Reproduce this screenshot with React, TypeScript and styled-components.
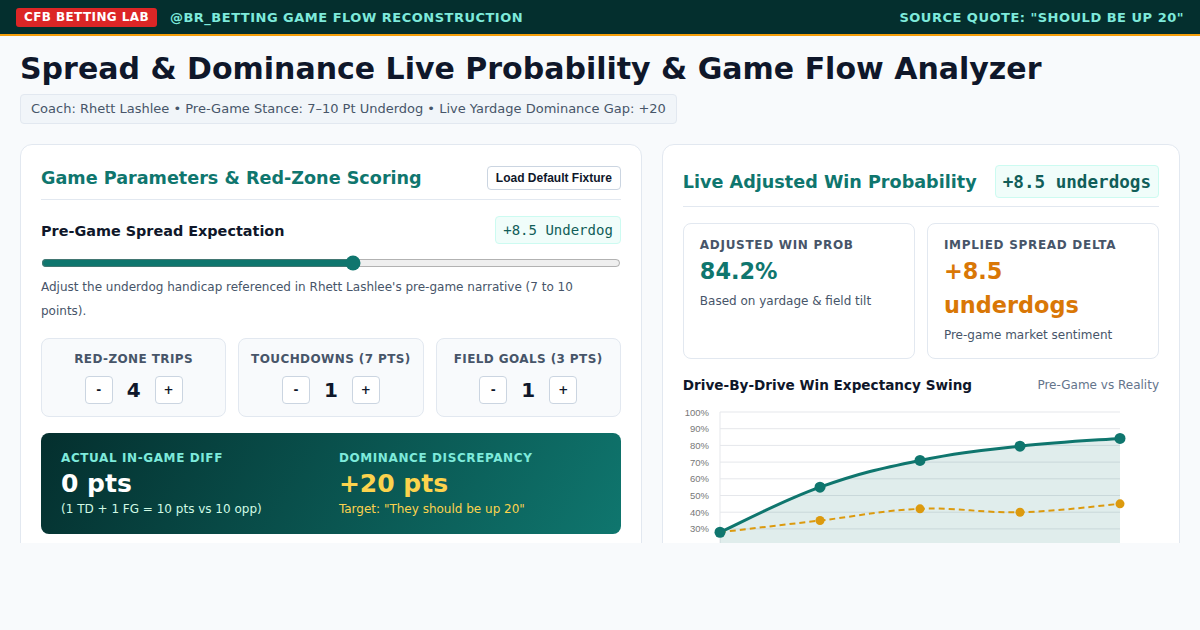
import React from "react";
import styled, { createGlobalStyle } from "styled-components";

const GlobalStyle = createGlobalStyle`
  * { box-sizing: border-box; }
  body {
    margin: 0;
    background: #f8fafc;
    font-family: "DejaVu Sans", "Noto Sans", sans-serif;
    color: #0f172a;
  }
`;

const S = {
  TopBar: styled.header`
    height: 36px;
    background: #042f2e;
    border-bottom: 2px solid #f59e0b;
    display: flex;
    align-items: center;
    justify-content: space-between;
    padding: 0 16px;
  `,
  Brand: styled.div`
    display: flex;
    align-items: center;
    gap: 13px;
  `,
  Badge: styled.span`
    background: #dc2626;
    color: #fff;
    font-size: 12px;
    font-weight: 700;
    letter-spacing: 0.4px;
    padding: 2px 8px;
    border-radius: 3px;
    line-height: 15px;
  `,
  BarText: styled.span`
    color: #7eeadb;
    font-size: 13px;
    font-weight: 700;
    letter-spacing: 0.5px;
  `,
  Main: styled.main`
    padding: 14px 20px 0;
  `,
  Title: styled.h1`
    margin: 0 0 6px;
    font-size: 30px;
    line-height: 38px;
    font-weight: 700;
    color: #0f172a;
  `,
  Subtitle: styled.div`
    display: inline-block;
    background: #f1f5f9;
    border: 1px solid #e2e8f0;
    border-radius: 4px;
    padding: 6px 10px;
    font-size: 13px;
    line-height: 16px;
    color: #475569;
  `,
  Grid: styled.div`
    margin-top: 20px;
    display: grid;
    grid-template-columns: 1.2fr 1fr;
    gap: 20px;
    height: 399px;
    overflow: hidden;
    align-items: start;
  `,
  Card: styled.section`
    background: #fff;
    border: 1px solid #e2e8f0;
    border-radius: 12px;
    padding: 20px;
  `,
  CardHeader: styled.div`
    display: flex;
    align-items: center;
    justify-content: space-between;
    gap: 12px;
    padding-bottom: 8px;
    border-bottom: 1px solid #e2e8f0;
    margin-bottom: 16px;
  `,
  CardTitle: styled.h2`
    margin: 0;
    font-size: 17.6px;
    line-height: 26px;
    font-weight: 700;
    color: #0f766e;
    white-space: nowrap;
  `,
  GhostButton: styled.button`
    font-family: "Liberation Sans", Arial, sans-serif;
    font-size: 12px;
    font-weight: 700;
    color: #0f172a;
    background: #fff;
    border: 1px solid #cbd5e1;
    border-radius: 4px;
    height: 24px;
    padding: 0 8px;
  `,
  Row: styled.div`
    display: flex;
    align-items: center;
    justify-content: space-between;
  `,
  FieldLabel: styled.div`
    font-size: 14.4px;
    line-height: 20px;
    padding-top: 2px;
    font-weight: 700;
    color: #0f172a;
  `,
  MonoTag: styled.span<{ $big?: boolean }>`
    font-family: "DejaVu Sans Mono", "Liberation Mono", monospace;
    font-size: ${(p) => (p.$big ? "17.6px" : "14px")};
    font-weight: ${(p) => (p.$big ? 700 : 400)};
    color: #115e59;
    background: #f0fdfa;
    border: 1px solid #ccfbf1;
    border-radius: 4px;
    height: ${(p) => (p.$big ? "33px" : "28px")};
    padding: 0 7px;
    display: inline-flex;
    align-items: center;
    white-space: nowrap;
  `,
  Slider: styled.input`
    display: block;
    width: 100%;
    margin: 11px 0 0;
    height: 16px;
    accent-color: #0f766e;
  `,
  Help: styled.p`
    margin: 4px 0 0;
    font-size: 12px;
    line-height: 24px;
    color: #475569;
  `,
  Counters: styled.div`
    margin-top: 15px;
    display: grid;
    grid-template-columns: repeat(3, 1fr);
    gap: 12px;
  `,
  Counter: styled.div`
    background: #f8fafc;
    border: 1px solid #e2e8f0;
    border-radius: 8px;
    padding: 12px 6px;
    text-align: center;
  `,
  CounterLabel: styled.div`
    font-size: 12px;
    line-height: 16px;
    font-weight: 700;
    letter-spacing: 0.4px;
    color: #475569;
    text-transform: uppercase;
    white-space: nowrap;
  `,
  Stepper: styled.div`
    margin-top: 9px;
    display: flex;
    justify-content: center;
    align-items: center;
    gap: 14px;
  `,
  StepButton: styled.button`
    width: 28px;
    height: 28px;
    background: #fff;
    border: 1px solid #cbd5e1;
    border-radius: 4px;
    font-family: "DejaVu Sans", sans-serif;
    font-size: 12px;
    font-weight: 700;
    color: #0f172a;
    padding: 0;
  `,
  Count: styled.span`
    font-size: 20px;
    font-weight: 700;
    min-width: 14px;
    color: #0f172a;
  `,
  Summary: styled.div`
    margin-top: 16px;
    border-radius: 8px;
    background: linear-gradient(120deg, #042f2e 0%, #0f766e 100%);
    padding: 18px 20px 17px;
    display: grid;
    grid-template-columns: 1fr 1fr;
    gap: 16px;
  `,
  SummaryLabel: styled.div`
    font-size: 12px;
    line-height: 15px;
    font-weight: 700;
    letter-spacing: 0.6px;
    color: #7eeadb;
  `,
  SummaryValue: styled.div<{ $accent?: boolean }>`
    margin-top: 3px;
    font-size: 25px;
    line-height: 30px;
    font-weight: 700;
    color: ${(p) => (p.$accent ? "#fcd34d" : "#fff")};
  `,
  SummaryNote: styled.div<{ $accent?: boolean }>`
    margin-top: 2px;
    font-size: 12px;
    line-height: 16px;
    color: ${(p) => (p.$accent ? "#fcd34d" : "#d1fae5")};
  `,
  Metrics: styled.div`
    display: grid;
    grid-template-columns: 1fr 1fr;
    gap: 12px;
  `,
  Metric: styled.div`
    border: 1px solid #e2e8f0;
    border-radius: 8px;
    padding: 14px 16px 15px;
  `,
  MetricLabel: styled.div`
    font-size: 12px;
    line-height: 14px;
    font-weight: 700;
    letter-spacing: 0.7px;
    color: #475569;
  `,
  MetricValue: styled.div<{ $tone: "teal" | "amber" }>`
    margin-top: 2px;
    font-size: 22.4px;
    line-height: 34px;
    font-weight: 700;
    color: ${(p) => (p.$tone === "teal" ? "#0f766e" : "#d97706")};
  `,
  MetricNote: styled.div`
    margin-top: 5px;
    font-size: 12px;
    line-height: 16px;
    color: #475569;
  `,
  ChartHead: styled.div`
    margin-top: 18px;
    display: flex;
    align-items: center;
    justify-content: space-between;
  `,
  ChartTitle: styled.div`
    font-size: 13.6px;
    line-height: 16px;
    font-weight: 700;
    color: #0f172a;
  `,
  ChartHint: styled.div`
    font-size: 12px;
    color: #64748b;
  `,
  ChartBox: styled.div`
    margin-top: 8px;
    height: 210px;
  `,
};

const team = [28, 55, 71, 79.5, 84.2];
const pregame = [28, 35, 42, 40, 45];
const X0 = 37;
const STEP = 100;
const yOf = (v: number) => 178 - v * 1.67;

function smoothPath(values: number[]) {
  const pts = values.map((v, i) => [X0 + i * STEP, yOf(v)]);
  const t = 0.4;
  let d = `M${pts[0][0]},${pts[0][1]}`;
  for (let i = 0; i < pts.length - 1; i++) {
    const p0 = pts[i - 1] || pts[i];
    const p1 = pts[i];
    const p2 = pts[i + 1];
    const p3 = pts[i + 2] || p2;
    const c1x = p1[0] + ((p2[0] - p0[0]) * t) / 2;
    const c1y = p1[1] + ((p2[1] - p0[1]) * t) / 2;
    const c2x = p2[0] - ((p3[0] - p1[0]) * t) / 2;
    const c2y = p2[1] - ((p3[1] - p1[1]) * t) / 2;
    d += ` C${c1x},${c1y} ${c2x},${c2y} ${p2[0]},${p2[1]}`;
  }
  return d;
}

function SwingChart() {
  const ticks = [0, 10, 20, 30, 40, 50, 60, 70, 80, 90, 100];
  const teamLine = smoothPath(team);
  const lastX = X0 + (team.length - 1) * STEP;
  return (
    <svg width="476" height="210" viewBox="0 0 476 210">
      {ticks.map((t) => (
        <g key={t}>
          <line x1={X0} x2={lastX} y1={yOf(t)} y2={yOf(t)} stroke="#e5e7eb" strokeWidth="1" />
          <text
            x="26"
            y={yOf(t) + 3.5}
            textAnchor="end"
            fontSize="9.5"
            fill="#777"
            fontFamily="Liberation Sans, Arial, sans-serif"
          >
            {t}%
          </text>
        </g>
      ))}
      <line x1={X0} x2={X0} y1={yOf(100)} y2={yOf(0)} stroke="#e5e7eb" strokeWidth="1" />
      <path d={`${teamLine} L${lastX},${yOf(0)} L${X0},${yOf(0)} Z`} fill="rgba(15,118,110,0.13)" />
      <path
        d={smoothPath(pregame)}
        fill="none"
        stroke="#dc9a0e"
        strokeWidth="2"
        strokeDasharray="6 4"
      />
      <path d={teamLine} fill="none" stroke="#0f766e" strokeWidth="3" />
      {pregame.map((v, i) => (
        <circle key={`p${i}`} cx={X0 + i * STEP} cy={yOf(v)} r="4.5" fill="#dc9a0e" />
      ))}
      {team.map((v, i) => (
        <circle key={`t${i}`} cx={X0 + i * STEP} cy={yOf(v)} r="5.5" fill="#0f766e" />
      ))}
    </svg>
  );
}

const counters = [
  { label: "Red-Zone Trips", value: 4 },
  { label: "Touchdowns (7 pts)", value: 1 },
  { label: "Field Goals (3 pts)", value: 1 },
];

export default function App() {
  return (
    <>
      <GlobalStyle />
      <S.TopBar>
        <S.Brand>
          <S.Badge>CFB BETTING LAB</S.Badge>
          <S.BarText>@BR_BETTING GAME FLOW RECONSTRUCTION</S.BarText>
        </S.Brand>
        <S.BarText>SOURCE QUOTE: "SHOULD BE UP 20"</S.BarText>
      </S.TopBar>

      <S.Main>
        <S.Title>Spread &amp; Dominance Live Probability &amp; Game Flow Analyzer</S.Title>
        <S.Subtitle>
          Coach: Rhett Lashlee • Pre-Game Stance: 7–10 Pt Underdog • Live Yardage Dominance Gap: +20
        </S.Subtitle>

        <S.Grid>
          <S.Card>
            <S.CardHeader>
              <S.CardTitle>Game Parameters &amp; Red-Zone Scoring</S.CardTitle>
              <S.GhostButton>Load Default Fixture</S.GhostButton>
            </S.CardHeader>

            <S.Row>
              <S.FieldLabel>Pre-Game Spread Expectation</S.FieldLabel>
              <S.MonoTag>+8.5 Underdog</S.MonoTag>
            </S.Row>
            <S.Slider type="range" min={1.5} max={14.5} step={0.5} defaultValue={8.5} />
            <S.Help>
              Adjust the underdog handicap referenced in Rhett Lashlee's pre-game narrative (7 to 10
              points).
            </S.Help>

            <S.Counters>
              {counters.map((c) => (
                <S.Counter key={c.label}>
                  <S.CounterLabel>{c.label}</S.CounterLabel>
                  <S.Stepper>
                    <S.StepButton>-</S.StepButton>
                    <S.Count>{c.value}</S.Count>
                    <S.StepButton>+</S.StepButton>
                  </S.Stepper>
                </S.Counter>
              ))}
            </S.Counters>

            <S.Summary>
              <div>
                <S.SummaryLabel>ACTUAL IN-GAME DIFF</S.SummaryLabel>
                <S.SummaryValue>0 pts</S.SummaryValue>
                <S.SummaryNote>(1 TD + 1 FG = 10 pts vs 10 opp)</S.SummaryNote>
              </div>
              <div>
                <S.SummaryLabel>DOMINANCE DISCREPANCY</S.SummaryLabel>
                <S.SummaryValue $accent>+20 pts</S.SummaryValue>
                <S.SummaryNote $accent>Target: "They should be up 20"</S.SummaryNote>
              </div>
            </S.Summary>
          </S.Card>

          <S.Card>
            <S.CardHeader>
              <S.CardTitle>Live Adjusted Win Probability</S.CardTitle>
              <S.MonoTag $big>+8.5 underdogs</S.MonoTag>
            </S.CardHeader>

            <S.Metrics>
              <S.Metric>
                <S.MetricLabel>ADJUSTED WIN PROB</S.MetricLabel>
                <S.MetricValue $tone="teal">84.2%</S.MetricValue>
                <S.MetricNote>Based on yardage &amp; field tilt</S.MetricNote>
              </S.Metric>
              <S.Metric>
                <S.MetricLabel>IMPLIED SPREAD DELTA</S.MetricLabel>
                <S.MetricValue $tone="amber">+8.5 underdogs</S.MetricValue>
                <S.MetricNote>Pre-game market sentiment</S.MetricNote>
              </S.Metric>
            </S.Metrics>

            <S.ChartHead>
              <S.ChartTitle>Drive-By-Drive Win Expectancy Swing</S.ChartTitle>
              <S.ChartHint>Pre-Game vs Reality</S.ChartHint>
            </S.ChartHead>
            <S.ChartBox>
              <SwingChart />
            </S.ChartBox>
          </S.Card>
        </S.Grid>
      </S.Main>
    </>
  );
}
